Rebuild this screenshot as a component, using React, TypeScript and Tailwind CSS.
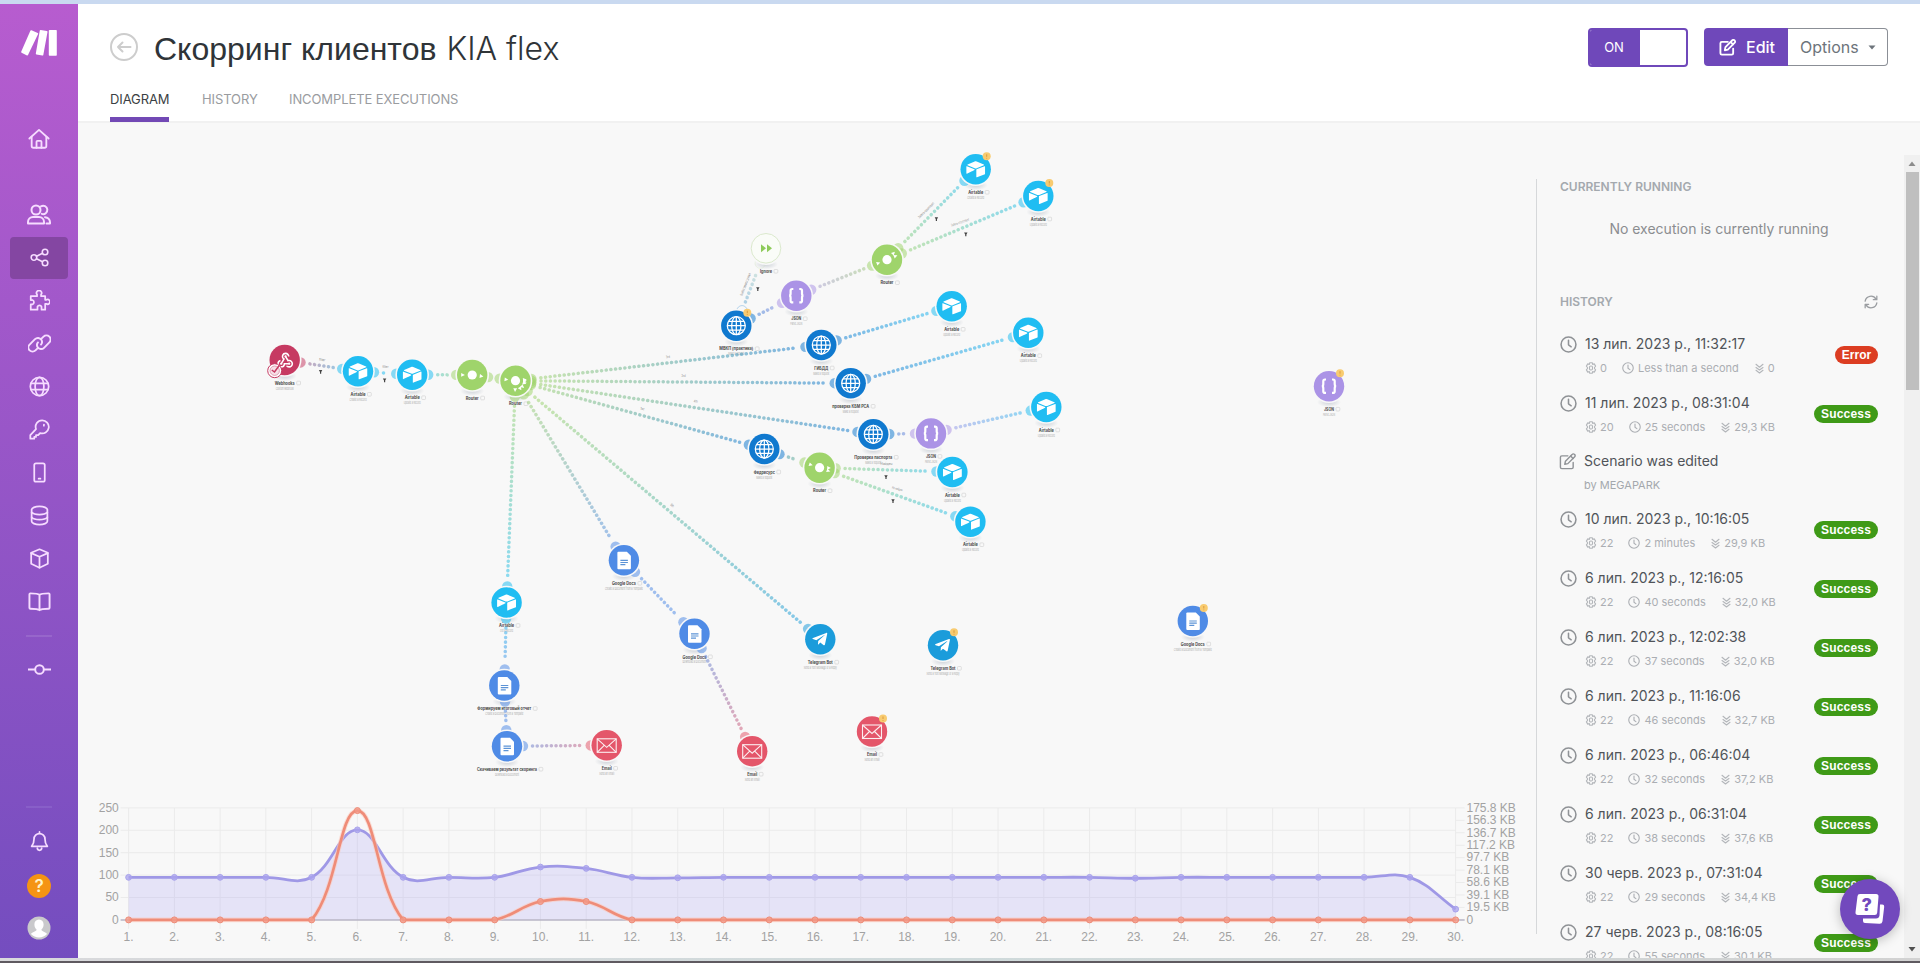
import React from "react";
import { SiAirtable } from "react-icons/si";
import { FaTelegramPlane } from "react-icons/fa";
import { MdWebhook } from "react-icons/md";

/* ---------- sidebar icons ---------- */

type Glyph = { d: string[]; w: number; box?: string };

const GLYPHS: Record<string, Glyph> = {
  home: { w: 22, d: ["M1.5 11.5 12 2l10.5 9.5", "M4 9.6V19.500a2 2 0 0 0 2 2h12a2 2 0 0 0 2-2V9.600", "M9.300 21.500v-6.500a1 1 0 0 1 1-1h3.400a1 1 0 0 1 1 1v6.500"] },
  users: { w: 24, d: ["M9 2.500a4.500 4.500 0 1 1 0 9 4.500 4.500 0 0 1 0-9z", "M1 20.500v-1.500a5 5 0 0 1 5-5h6a5 5 0 0 1 5 5v1.500z", "M14 3.300a4.200 4.200 0 1 1 .8 7.600", "M18 14.200c2.800.300 5 2.300 5 5v1.300h-3.500"] },
  share: { w: 19, d: ["M5 8.500a3.500 3.500 0 1 1 0 7 3.500 3.500 0 0 1 0-7z", "M19 1.500a3.500 3.500 0 1 1 0 7 3.500 3.500 0 0 1 0-7z", "M19 15.500a3.500 3.500 0 1 1 0 7 3.500 3.500 0 0 1 0-7z", "M8.300 10.500l7.500-3.800M8.300 13.500l7.500 3.800"] },
  puzzle: { w: 21, d: ["M2 7h7.200V5.200a2.900 2.900 0 1 1 4.600 0V7h4.700v4.200h1.300a2.700 2.700 0 1 1 0 4.600h-1.300v6.700h-4.200v-3.500a2.500 2.500 0 0 0-4.600 0v3.500H2v-6h2a2.700 2.700 0 0 0 0-5H2z"] },
  link: { w: 23, d: ["M10.200 16.800l-2.400 2.400a4.300 4.300 0 0 1-6.100-6.100l5.600-5.600a4.300 4.300 0 0 1 6.600.6c1 1.500.9 3.600-.3 5", "M13.800 7.200l2.400-2.400a4.300 4.300 0 0 1 6.100 6.100l-5.600 5.600a4.300 4.300 0 0 1-6.600-.6c-1-1.500-.9-3.600.3-5"] },
  globe: { w: 21, d: ["M12 1.500a10.500 10.500 0 1 1 0 21 10.500 10.500 0 0 1 0-21z", "M12 1.500c3 0 5 4.700 5 10.500s-2 10.500-5 10.500-5-4.700-5-10.500 2-10.500 5-10.500z", "M2.500 8.500h19M2.500 15.500h19"] },
  key: { w: 21, d: ["M15 1.500a7.500 7.500 0 1 1-2.300 14.600L10.500 18.500H8v2H6v2H1.500V18.500L8 11.500A7.500 7.500 0 0 1 15 1.500z", "M17 6.300v1.400"] },
  phone: { w: 21, d: ["M8 1.500h8a2 2 0 0 1 2 2v17a2 2 0 0 1-2 2H8a2 2 0 0 1-2-2v-17a2 2 0 0 1 2-2z", "M11 19h2"] },
  database: { w: 21, d: ["M3 5.500c0-2.200 4-4 9-4s9 1.800 9 4v13c0 2.200-4 4-9 4s-9-1.800-9-4z", "M3 8.500c1.500 1.500 5 2.500 9 2.500s7.500-1 9-2.500", "M3 14c1.500 1.800 5 2.800 9 2.800s7.500-1 9-2.800"] },
  cube: { w: 21, d: ["M12 1.500l9.500 4v12.500l-9.500 4.500-9.500-4.500V5.500z", "M2.500 5.800l9.500 4.200 9.500-4.200M12 10v12.500"] },
  book: { w: 23, d: ["M12 5c-1-1-3-1.500-9.500-1.500a1 1 0 0 0-1 1v14a1 1 0 0 0 1 1c6.500 0 8.500.5 9.500 1.500 1-1 3-1.500 9.500-1.500a1 1 0 0 0 1-1v-14a1 1 0 0 0-1-1C15 3.500 13 4 12 5zM12 5v15.500"] },
  commit: { w: 23, d: ["M12 7.500a4.500 4.500 0 1 1 0 9 4.500 4.500 0 0 1 0-9z", "M0.500 12h7M16.500 12h7"] },
  bell: { w: 21, d: ["M12 1v2M12 3a6.300 6.300 0 0 1 6.300 6.300c0 5.200 1.200 6.400 2.700 8.200H3c1.500-1.800 2.700-3 2.700-8.200A6.300 6.300 0 0 1 12 3z", "M9.500 19.500a2.500 2.500 0 0 0 5 0"] },
};

function Glyph({ name }: { name: string }) {
  const g = GLYPHS[name];
  return (
    <svg width={g.w} height={g.w} viewBox="0 0 24 24" fill="none" stroke="#f6dcff" strokeWidth="2" strokeLinejoin="round" strokeLinecap="round">
      {g.d.map((d) => (
        <path key={d} d={d} />
      ))}
    </svg>
  );
}

function NavItem({ name, active }: { name: string; active?: boolean }) {
  return (
    <div className="flex h-[43px] w-full shrink-0 items-center justify-center">
      <div className={active ? "flex h-[42px] w-[58px] items-center justify-center rounded bg-[#8446a2]" : "flex items-center justify-center"}>
        <Glyph name={name} />
      </div>
    </div>
  );
}

function Sidebar() {
  return (
    <nav className="flex w-[78px] shrink-0 flex-col items-center bg-linear-to-b from-[#b75ccf] to-[#744dbf]">
      <svg className="mt-[25px] shrink-0" width="38" height="28" viewBox="0 0 38 28" fill="#fff">
        <path d="M11.500 1.200l6.200 2.800a.8.800 0 0 1 .4 1L8 26a.8.800 0 0 1-1 .4L1.600 23.800a.8.800 0 0 1-.4-1L10.500 1.600a.8.800 0 0 1 1-.4z" />
        <path d="M20.700.900l6.200 1.200a.8.800 0 0 1 .6.900L23.300 26a.8.800 0 0 1-.9.600l-6-1.200a.8.800 0 0 1-.6-.9L19.800 1.500a.8.800 0 0 1 .9-.6z" />
        <rect x="28.800" y="1" width="8" height="25.700" rx=".8" />
      </svg>
      <div className="mt-[60px] w-full"><NavItem name="home" /></div>
      <div className="mt-[33px] w-full">
        <NavItem name="users" />
        <NavItem name="share" active />
        <NavItem name="puzzle" />
        <NavItem name="link" />
        <NavItem name="globe" />
        <NavItem name="key" />
        <NavItem name="phone" />
        <NavItem name="database" />
        <NavItem name="cube" />
        <NavItem name="book" />
      </div>
      <div className="mt-[12px] h-[2px] w-[26px] shrink-0 bg-[#9766cb]" />
      <div className="mt-[11px] w-full"><NavItem name="commit" /></div>
      <div className="mt-[115px] h-[2px] w-[26px] shrink-0 bg-[#885fc8]" />
      <div className="mt-[12px] w-full"><NavItem name="bell" /></div>
      <div className="mt-[11px] flex size-[24px] shrink-0 items-center justify-center rounded-full bg-[#f59413] font-['Inter',sans-serif] text-[17px] leading-none font-semibold text-[#fff3c8]">?</div>
      <svg className="mt-[18px] shrink-0" width="24" height="24" viewBox="0 0 24 24">
        <circle cx="12" cy="12" r="11.500" fill="#c9c9cb" />
        <path d="M12 3.500c3 0 4.600 2.200 4.600 5 0 2.300-1 4.300-2.300 5.200.2 1.700 4.700 2 5.700 4.300a11 11 0 0 1-16 0c1-2.300 5.500-2.600 5.700-4.300-1.300-.9-2.300-2.900-2.300-5.200 0-2.800 1.600-5 4.600-5z" fill="#fff" />
      </svg>
    </nav>
  );
}

/* ---------- header ---------- */

function PenSquare({ size, color, width }: { size: number; color: string; width: number }) {
  return (
    <svg width={size} height={size} viewBox="0 0 24 24" fill="none" stroke={color} strokeWidth={width} strokeLinejoin="round" strokeLinecap="round">
      <path d="M12.500 4H4a2 2 0 0 0-2 2v14a2 2 0 0 0 2 2h14a2 2 0 0 0 2-2v-6.500" />
      <path d="M18.800 1.800a2 2 0 0 1 2.900 0l.5.500a2 2 0 0 1 0 2.900L12.500 15l-4.300.9.900-4.400z" />
      <path d="M16.500 4.300l3.300 3.300" />
    </svg>
  );
}

function Header() {
  return (
    <header className="flex h-[119px] shrink-0 flex-col border-b-2 border-[#f1f1f1] bg-white">
      <div className="flex h-[77px] items-start pl-[32px] pr-[32px]">
        <svg className="mt-[29px] shrink-0" width="28" height="28" viewBox="0 0 28 28" fill="none" stroke="#cdcdcd" strokeWidth="2" strokeLinecap="round" strokeLinejoin="round">
          <circle cx="14" cy="14" r="13" />
          <path d="M20.500 14H8M12.500 9.500L8 14l4.500 4.500" />
        </svg>
        <h1 className="mt-[25px] ml-[16px] flex items-baseline gap-[10px] text-[32px] leading-[40px] whitespace-nowrap text-[#2f3438]">
          <span className="font-['Liberation_Sans',Arial,sans-serif]">Скорринг клиентов</span>
          <span className="font-light">KIA flex</span>
        </h1>
        <div className="mt-[24px] ml-auto flex h-[39px] w-[100px] overflow-hidden rounded border-2 border-[#6f48ba] bg-white">
          <div className="flex w-[50px] items-center justify-center bg-[#6f48ba] pr-[2px] text-[13px] text-white">ON</div>
        </div>
        <div className="mt-[24px] ml-[16px] flex h-[38px]">
          <div className="flex w-[84px] items-center rounded-l bg-[#6f48ba] pl-[15px] text-[16px] font-medium text-white">
            <PenSquare size={17} color="#fff" width={2.6} />
            <span className="ml-[10px]">Edit</span>
          </div>
          <div className="flex w-[100px] items-center rounded-r border border-l-0 border-[#8b8f96] pl-[12px] text-[16px] text-[#6d747b]">
            <span>Options</span>
            <svg className="ml-[9px]" width="8" height="5" viewBox="0 0 8 5"><path d="M0.500 0.500h7L4 4.500z" fill="#6d747b" /></svg>
          </div>
        </div>
      </div>
      <div className="flex h-[42px] shrink-0 gap-[33px] pl-[32px] text-[13px] leading-[41px] tracking-[-0.1px] text-[#9a9c9f]">
        <div className="h-[43px] w-[59px] border-b-[5px] border-[#7249b5] text-[#3b3f44]">DIAGRAM</div>
        <div className="w-[54px]">HISTORY</div>
        <div>INCOMPLETE EXECUTIONS</div>
      </div>
    </header>
  );
}

/* ---------- diagram ---------- */

type Kind = "webhook" | "airtable" | "router" | "http" | "json" | "docs" | "telegram" | "email" | "ignore";

const COLORS: Record<Kind, string> = {
  webhook: "#c63a62",
  airtable: "#20bdf2",
  router: "#9fd46b",
  http: "#1079cf",
  json: "#ab93e6",
  docs: "#4f8be6",
  telegram: "#1b9cdb",
  email: "#e4566a",
  ignore: "#c9e2b4",
};

type Node = { x: number; y: number; k: Kind; n: string; w: number; s?: string; sw?: number; warn?: boolean };

const NODES: Record<string, Node> = {
  wh: { x: 284.7, y: 360, k: "webhook", n: "Webhooks", w: 20, s: "Custom webhook", sw: 18 },
  a1: { x: 358, y: 371.3, k: "airtable", n: "Airtable", w: 15, s: "Create a Record", sw: 17 },
  a2: { x: 412.2, y: 374.7, k: "airtable", n: "Airtable", w: 15, s: "Update a Record", sw: 17 },
  r1: { x: 472.2, y: 375, k: "router", n: "Router", w: 13 },
  r2: { x: 515.5, y: 380.7, k: "router", n: "Router", w: 13 },
  ig: { x: 766, y: 248.3, k: "ignore", n: "Ignore", w: 12 },
  h1: { x: 736.3, y: 325.7, k: "http", n: "МВКП (практика)", w: 34, s: "Make a request", sw: 16, warn: true },
  j1: { x: 796.3, y: 295.7, k: "json", n: "JSON", w: 10, s: "Parse JSON", sw: 12 },
  r3: { x: 887, y: 259.7, k: "router", n: "Router", w: 13 },
  a3: { x: 975.7, y: 169.3, k: "airtable", n: "Airtable", w: 15, s: "Create a Record", sw: 17, warn: true },
  a4: { x: 1038.3, y: 196, k: "airtable", n: "Airtable", w: 15, s: "Update a Record", sw: 17, warn: true },
  h2: { x: 821.3, y: 345, k: "http", n: "ГИБДД", w: 14, s: "Make a request", sw: 16 },
  a5: { x: 951.7, y: 306.3, k: "airtable", n: "Airtable", w: 15, s: "Update a Record", sw: 17 },
  h3: { x: 850.7, y: 383.3, k: "http", n: "проверка КБМ РСА", w: 37, s: "Make a request", sw: 16 },
  a6: { x: 1028.3, y: 332.7, k: "airtable", n: "Airtable", w: 15, s: "Update a Record", sw: 17 },
  h4: { x: 873.3, y: 434.3, k: "http", n: "Проверка паспорта", w: 38, s: "Make a request", sw: 16 },
  j2: { x: 931, y: 433.4, k: "json", n: "JSON", w: 10, s: "Parse JSON", sw: 12 },
  a7: { x: 1046.3, y: 407, k: "airtable", n: "Airtable", w: 15, s: "Update a Record", sw: 17 },
  h5: { x: 764.3, y: 449, k: "http", n: "Федресурс", w: 21, s: "Make a request", sw: 16 },
  r4: { x: 819.6, y: 467.7, k: "router", n: "Router", w: 13 },
  a8: { x: 952.4, y: 472, k: "airtable", n: "Airtable", w: 15, s: "Update a Record", sw: 17 },
  a9: { x: 970.4, y: 521.7, k: "airtable", n: "Airtable", w: 15, s: "Update a Record", sw: 17 },
  j3: { x: 1329, y: 386.2, k: "json", n: "JSON", w: 10, s: "Parse JSON", sw: 12, warn: true },
  d4: { x: 1192.8, y: 621, k: "docs", n: "Google Docs", w: 24, s: "Create a Document from a Template", sw: 38, warn: true },
  a10: { x: 506.6, y: 602.5, k: "airtable", n: "Airtable", w: 15, s: "Get a Record", sw: 13 },
  d1: { x: 504.3, y: 685.5, k: "docs", n: "Формируем итоговый отчет", w: 54, s: "Create a Document from a Template", sw: 38 },
  d2: { x: 507, y: 746.2, k: "docs", n: "Скачиваем результат скоринга", w: 60, s: "Download a Document", sw: 24 },
  e1: { x: 606.7, y: 745.3, k: "email", n: "Email", w: 10, s: "Send an Email", sw: 15 },
  d3: { x: 623.9, y: 560.3, k: "docs", n: "Google Docs", w: 24, s: "Create a Document from a Template", sw: 38 },
  d5: { x: 694.5, y: 633.8, k: "docs", n: "Google Docs", w: 24, s: "Download a Document", sw: 24 },
  e2: { x: 752.2, y: 751.2, k: "email", n: "Email", w: 10, s: "Send an Email", sw: 15 },
  e3: { x: 872, y: 731.5, k: "email", n: "Email", w: 10, s: "Send an Email", sw: 15, warn: true },
  t1: { x: 820.3, y: 639.2, k: "telegram", n: "Telegram Bot", w: 25, s: "Send a Text Message or a Reply", sw: 33 },
  t2: { x: 943, y: 645.3, k: "telegram", n: "Telegram Bot", w: 25, s: "Send a Text Message or a Reply", sw: 33, warn: true },
};

const EDGES: [string, string][] = [
  ["wh", "a1"], ["a1", "a2"], ["a2", "r1"], ["r1", "r2"],
  ["r2", "h2"], ["r2", "h3"], ["r2", "h4"], ["r2", "h5"], ["r2", "t1"], ["r2", "d3"], ["r2", "a10"],
  ["h1", "j1"], ["h1", "ig"], ["j1", "r3"], ["r3", "a3"], ["r3", "a4"],
  ["h2", "a5"], ["h3", "a6"], ["h4", "j2"], ["j2", "a7"], ["h5", "r4"], ["r4", "a8"], ["r4", "a9"],
  ["a10", "d1"], ["d1", "d2"], ["d2", "e1"], ["d3", "d5"], ["d5", "e2"],
];

const NOTES: { x: number; y: number; r: number; t: string; w: number }[] = [
  { x: 322, y: 361, r: 6, t: "filter", w: 6 },
  { x: 385.500, y: 368, r: 0, t: "filter", w: 6 },
  { x: 927, y: 211, r: -45, t: "Запись существует", w: 21 },
  { x: 960.500, y: 223.500, r: -19, t: "Запись отсутствует", w: 19 },
  { x: 746.500, y: 285, r: -69, t: "Ошибка сервиса данных", w: 24 },
  { x: 886.500, y: 464.500, r: 0, t: "Найден", w: 12 },
  { x: 897, y: 490, r: 15, t: "Не найден", w: 11 },
  { x: 668, y: 358, r: -6, t: "3rd", w: 4 },
  { x: 683.500, y: 377, r: 0, t: "2nd", w: 4 },
  { x: 695.500, y: 402.500, r: 8, t: "4th", w: 4 },
  { x: 671.500, y: 506.500, r: 38, t: "6th", w: 4 },
  { x: 642, y: 410, r: 14, t: "1st", w: 4 },
];

const FUNNELS: [number, number][] = [[320.6, 371.7], [384.6, 380.2], [936.4, 219], [965.8, 234.2], [757.8, 289], [886, 477], [893, 501]];

function NodeIcon({ node }: { node: Node }) {
  const { x, y, k } = node;
  if (k === "airtable") return <SiAirtable x={x - 9.5} y={y - 9.5} size={19} color="#fff" />;
  if (k === "telegram") return <FaTelegramPlane x={x - 9} y={y - 8.5} size={17} color="#fff" />;
  if (k === "webhook") return <MdWebhook x={x - 9} y={y - 9} size={19} color="#fff" />;
  if (k === "router") {
    const arrows = EDGES.flatMap(([a, b]) => {
      if (NODES[a] === node) return [{ t: Math.atan2(NODES[b].y - y, NODES[b].x - x), flip: 0 }];
      if (NODES[b] === node) return [{ t: Math.atan2(NODES[a].y - y, NODES[a].x - x), flip: 180 }];
      return [];
    });
    return (
      <g fill="#fff">
        <circle cx={x} cy={y} r="4.6" />
        {arrows.map((a, i) => (
          <path key={i} d="M-1.700 -1.900L2 0L-1.700 1.900z" transform={`translate(${x + Math.cos(a.t) * 9.3} ${y + Math.sin(a.t) * 9.3}) rotate(${(a.t * 180) / Math.PI + a.flip})`} />
        ))}
      </g>
    );
  }
  const g = `translate(${x} ${y})`;
  if (k === "http")
    return (
      <g transform={g} fill="none" stroke="#fff" strokeWidth="1.25">
        <circle r="9" />
        <ellipse rx="4.600" ry="9" />
        <path d="M0 -9V9M-9 0H9M-7.800 -4.300H7.800M-7.800 4.300H7.800" />
      </g>
    );
  if (k === "json")
    return (
      <g transform={g} fill="none" stroke="#fff" strokeWidth="2.200">
        <path d="M-3 -6.700H-4c-1.300 0-1.700.6-1.700 1.700v2.800c0 1.300-.4 2.200-1.500 2.200 1.100 0 1.500.9 1.500 2.200v2.800c0 1.100.4 1.700 1.700 1.700h1" />
        <path d="M3 -6.700H4c1.300 0 1.700.6 1.700 1.700v2.800c0 1.300.4 2.200 1.500 2.200-1.100 0-1.500.9-1.500 2.200v2.800c0 1.100-.4 1.700-1.700 1.700h-1" />
      </g>
    );
  if (k === "docs")
    return (
      <g transform={g}>
        <path d="M-5.500 -8.500H3L7 -4.500V8A1 1 0 0 1 6 9H-5.500A1 1 0 0 1 -6.500 8V-7.500A1 1 0 0 1 -5.500 -8.500z" fill="#fff" />
        <path d="M-3.500 0H4M-3.500 2.200H4M-3.500 4.400H1.500" stroke="#5c93d6" strokeWidth="1.200" />
      </g>
    );
  if (k === "email")
    return (
      <g transform={g} fill="none" stroke="#fff" strokeWidth="1.100" opacity=".9">
        <rect x="-9.500" y="-6.500" width="19" height="13.500" />
        <path d="M-9.500 -6.500L0 2L9.500 -6.500M-9.500 7L-2.500 0M9.500 7L2.500 0" />
      </g>
    );
  return (
    <g transform={g} fill="#8ecb5b">
      <path d="M-5 -4L0 0L-5 4zM1 -4L6 0L1 4z" />
    </g>
  );
}

function Diagram() {
  return (
    <svg className="block shrink-0 font-['Inter',sans-serif]" width="1459" height="667" viewBox="78 123 1459 667">
      <defs>
        <radialGradient id="shade">
          <stop offset="0" stopColor="#8d98a8" stopOpacity=".4" />
          <stop offset="1" stopColor="#8d98a8" stopOpacity="0" />
        </radialGradient>
        {EDGES.map(([a, b]) => {
          const p = NODES[a], q = NODES[b];
          return (
            <linearGradient key={a + b} id={`g-${a}-${b}`} gradientUnits="userSpaceOnUse" x1={p.x} y1={p.y} x2={q.x} y2={q.y}>
              <stop offset="0.05" stopColor={COLORS[p.k]} />
              <stop offset="0.95" stopColor={COLORS[q.k]} />
            </linearGradient>
          );
        })}
      </defs>
      {Object.entries(NODES).map(([id, n]) => (
        <ellipse key={id} cx={n.x} cy={n.y + 16} rx="12" ry="5" fill="url(#shade)" />
      ))}
      {Object.entries(NODES).map(([id, n]) => (
        <g key={id}>
          <text x={n.x} y={n.y + 24.700} fontSize="4.600" fontWeight="700" fill="#4a4a4a" textAnchor="middle" textLength={n.w} lengthAdjust="spacingAndGlyphs">{n.n}</text>
          <rect x={n.x + n.w / 2 + 2} y={n.y + 21.200} width="3.800" height="3.600" rx=".8" fill="none" stroke="#cfcfcf" strokeWidth=".6" />
          {n.s && (
            <text x={n.x} y={n.y + 29.600} fontSize="3.800" fill="#aaaaaa" textAnchor="middle" textLength={n.sw} lengthAdjust="spacingAndGlyphs">{n.s}</text>
          )}
        </g>
      ))}
      {EDGES.map(([a, b]) => {
        const p = NODES[a], q = NODES[b];
        const len = Math.hypot(q.x - p.x, q.y - p.y);
        const ux = (q.x - p.x) / len, uy = (q.y - p.y) / len;
        const faint = q.k === "ignore";
        return (
          <g key={a + b} opacity={faint ? 0.4 : 0.52}>
            <circle cx={p.x + ux * 16} cy={p.y + uy * 16} r="5.200" fill={faint ? "none" : COLORS[p.k]} stroke={faint ? COLORS[p.k] : "none"} strokeWidth=".7" />
            <circle cx={q.x - ux * 16} cy={q.y - uy * 16} r="5.200" fill={faint ? "none" : COLORS[q.k]} stroke={faint ? COLORS[q.k] : "none"} strokeWidth=".7" />
            {len > 50 && (
              <line x1={p.x + ux * 25.500} y1={p.y + uy * 25.500} x2={q.x - ux * 25} y2={q.y - uy * 25} stroke={`url(#g-${a}-${b})`} strokeWidth="3.500" strokeLinecap="round" strokeDasharray="0.100 4.600" />
            )}
          </g>
        );
      })}
      {NOTES.map((n, i) => (
        <text key={i} transform={`translate(${n.x} ${n.y}) rotate(${n.r})`} fontSize="3.600" fill="#8a8a8a" textAnchor="middle" textLength={n.w} lengthAdjust="spacingAndGlyphs">{n.t}</text>
      ))}
      {FUNNELS.map(([x, y]) => (
        <path key={x} d={`M${x - 1.7} ${y - 1.8}h3.4l-1.100 2v1.800h-1.200v-1.800z`} fill="#444" />
      ))}
      {Object.entries(NODES).map(([id, n]) => (
        <g key={id}>
          <circle cx={n.x} cy={n.y} r="16.800" fill="#f8f8f8" />
          {n.k === "ignore" ? <circle cx={n.x} cy={n.y} r="14.800" fill="#fafcf8" stroke="#dbe9cd" strokeWidth="1" /> : <circle cx={n.x} cy={n.y} r="15.200" fill={COLORS[n.k]} />}
          <NodeIcon node={n} />
          {n.warn && (
            <g>
              <circle cx={n.x + 11} cy={n.y - 13} r="4" fill="#f8cb70" />
              <path d={`M${n.x + 11} ${n.y - 15}v2.500m0 1v.8`} stroke="#d9953a" strokeWidth=".9" />
            </g>
          )}
        </g>
      ))}
      <circle cx="274.700" cy="370.700" r="7" fill="#fff" stroke="#c63a62" strokeWidth="1" />
      <circle cx="274.700" cy="370.700" r="4.700" fill="#f7dfe6" stroke="#d98aa2" strokeWidth=".8" />
      <path d="M271.800 370l2.700 2 4.700-6.500" fill="none" stroke="#c63a62" strokeWidth="1.500" />
    </svg>
  );
}

/* ---------- chart ---------- */

const X0 = 128.6, STEP = 45.76, Y0 = 919.9, UNIT = 0.448;
const OPS = [95, 95, 95, 95, 95, 201, 95, 95, 95, 118, 115, 95, 94, 95, 95, 95, 95, 95, 95, 95, 95, 95, 93, 95, 95, 95, 95, 95, 95, 24];
const DATA = [0, 0, 0, 0, 0, 244, 0, 0, 0, 41, 41, 0, 0, 0, 0, 0, 0, 0, 0, 0, 0, 0, 0, 0, 0, 0, 0, 0, 0, 0];
const KB = ["175.8 KB", "156.3 KB", "136.7 KB", "117.2 KB", "97.7 KB", "78.1 KB", "58.6 KB", "39.1 KB", "19.5 KB", "0"];

const px = (i: number) => X0 + i * STEP;
const py = (v: number) => Y0 - v * UNIT;

function spline(values: number[]) {
  const pts = values.map((v, i) => [px(i), py(v)]);
  const clamp = (y: number) => Math.min(Y0, Math.max(807.9, y));
  const ctl = pts.map((p, i) => {
    const a = pts[i - 1] ?? p, b = pts[i + 1] ?? p;
    const d1 = Math.hypot(p[0] - a[0], p[1] - a[1]), d2 = Math.hypot(b[0] - p[0], b[1] - p[1]);
    const f1 = (0.4 * d1) / (d1 + d2), f2 = (0.4 * d2) / (d1 + d2);
    return [p[0] - f1 * (b[0] - a[0]), clamp(p[1] - f1 * (b[1] - a[1])), p[0] + f2 * (b[0] - a[0]), clamp(p[1] + f2 * (b[1] - a[1]))];
  });
  return pts.map((p, i) => (i === 0 ? `M${p[0]} ${p[1]}` : `C${ctl[i - 1][2]} ${ctl[i - 1][3]} ${ctl[i][0]} ${ctl[i][1]} ${p[0]} ${p[1]}`)).join("");
}

function Chart() {
  const top = 807.9;
  return (
    <svg className="block shrink-0 font-['Liberation_Sans',Arial,sans-serif]" width="1459" height="168" viewBox="78 790 1459 168" fontSize="12" fill="#a2a2a2">
      <g stroke="#ebebeb" strokeWidth="1">
        {OPS.map((_, i) => (
          <line key={i} x1={px(i)} x2={px(i)} y1={top} y2={Y0 + 9} />
        ))}
        {[50, 100, 150, 200, 250].map((v) => (
          <line key={v} x1={X0 - 8} x2={px(29)} y1={py(v)} y2={py(v)} />
        ))}
        {KB.map((k, i) => (
          <line key={k} x1={px(29)} x2={px(29) + 9} y1={top + i * 12.44} y2={top + i * 12.44} />
        ))}
      </g>
      <path d={`${spline(OPS)}V${Y0}H${X0}z`} fill="#9b93f5" fillOpacity=".2" />
      <line x1={X0 - 8} x2={px(29) + 9} y1={Y0} y2={Y0} stroke="#b9b6c6" strokeWidth="1.500" />
      <path d={spline(OPS)} fill="none" stroke="#9f98e6" strokeWidth="2.800" />
      {OPS.map((v, i) => (
        <circle key={i} cx={px(i)} cy={py(v)} r="2.900" fill="#aaa3ee" fillOpacity=".75" stroke="#a8a2ec" strokeWidth="1" />
      ))}
      <path d={spline(DATA)} fill="none" stroke="#fbc9bd" strokeWidth="4.600" opacity=".6" />
      <path d={spline(DATA)} fill="none" stroke="#ef8c78" strokeWidth="2.700" />
      {DATA.map((v, i) => (
        <circle key={i} cx={px(i)} cy={py(v)} r="3" fill="#f39a88" fillOpacity=".8" stroke="#ee8c78" strokeWidth="1" />
      ))}
      {[0, 50, 100, 150, 200, 250].map((v) => (
        <text key={v} x="118.800" y={py(v) + 3.900} textAnchor="end">{v}</text>
      ))}
      {OPS.map((_, i) => (
        <text key={i} x={px(i)} y="940.600" textAnchor="middle">{i + 1}.</text>
      ))}
      {KB.map((k, i) => (
        <text key={k} x="1466.500" y={top + i * 12.44 + 3.800}>{k}</text>
      ))}
    </svg>
  );
}

/* ---------- history panel ---------- */

type Run = { date: string; ops: string; time: string; size: string; error?: boolean; by?: string };

const RUNS: Run[] = [
  { date: "13 лип. 2023 р., 11:32:17", ops: "0", time: "Less than a second", size: "0", error: true },
  { date: "11 лип. 2023 р., 08:31:04", ops: "20", time: "25 seconds", size: "29,3 KB" },
  { date: "Scenario was edited", ops: "", time: "", size: "", by: "by MEGAPARK" },
  { date: "10 лип. 2023 р., 10:16:05", ops: "22", time: "2 minutes", size: "29,9 KB" },
  { date: "6 лип. 2023 р., 12:16:05", ops: "22", time: "40 seconds", size: "32,0 KB" },
  { date: "6 лип. 2023 р., 12:02:38", ops: "22", time: "37 seconds", size: "32,0 KB" },
  { date: "6 лип. 2023 р., 11:16:06", ops: "22", time: "46 seconds", size: "32,7 KB" },
  { date: "6 лип. 2023 р., 06:46:04", ops: "22", time: "32 seconds", size: "37,2 KB" },
  { date: "6 лип. 2023 р., 06:31:04", ops: "22", time: "38 seconds", size: "37,6 KB" },
  { date: "30 черв. 2023 р., 07:31:04", ops: "22", time: "29 seconds", size: "34,4 KB" },
  { date: "27 черв. 2023 р., 08:16:05", ops: "22", time: "55 seconds", size: "30,1 KB" },
];

function Clock({ size, color, width }: { size: number; color: string; width: number }) {
  return (
    <svg className="shrink-0" width={size} height={size} viewBox="0 0 24 24" fill="none" stroke={color} strokeWidth={width} strokeLinecap="round" strokeLinejoin="round">
      <circle cx="12" cy="12" r="10.500" />
      <path d="M12 6v6.500l3.800 2.700" />
    </svg>
  );
}

function Gear() {
  return (
    <svg className="shrink-0" width="12" height="12" viewBox="0 0 24 24" fill="none" stroke="#b3b6ba" strokeWidth="2.200" strokeLinejoin="round">
      <path d="M9.500 1.500h5l.8 3.200 3.200-.9 2.700 4.400L19 11v2l2.200 2.800-2.700 4.400-3.200-.9-.8 3.200h-5l-.8-3.200-3.200.9-2.700-4.400L5 13v-2L2.800 8.200l2.700-4.400 3.200.9z" />
      <rect x="9" y="8" width="6" height="8" rx="2.500" />
    </svg>
  );
}

function Chevrons() {
  return (
    <svg className="shrink-0" width="9" height="11" viewBox="0 0 18 22" fill="none" stroke="#b3b6ba" strokeWidth="2.200" strokeLinecap="round" strokeLinejoin="round">
      <path d="M2 2.500l7 6 7-6M2 9l7 5 7-5M2 14.500l7 5.500 7-5.500" />
    </svg>
  );
}

function RunRow({ run }: { run: Run }) {
  return (
    <div className={run.by ? "-mt-px flex h-[58px] shrink-0" : "flex h-[59px] shrink-0"}>
      <div className={run.by ? "w-[25px] shrink-0 pt-[5px]" : "w-[26px] shrink-0 pt-[5px]"}>
        {run.by ? <PenSquare size={17} color="#8f9296" width={2} /> : <div className="pl-px"><Clock size={17} color="#8f9296" width={2.2} /></div>}
      </div>
      <div className="flex-1 whitespace-nowrap">
        <div className="h-[26px] text-[14px] leading-[26px] text-[#505459]">{run.date}</div>
        {run.by ? (
          <div className="h-[22px] text-[11px] leading-[22px] text-[#a4a8ad]">{run.by}</div>
        ) : (
          <div className="flex h-[22px] items-center text-[11px] leading-[22px] text-[#abaeb3]">
            <Gear />
            <span className="ml-[3px]">{run.ops}</span>
            <span className="ml-[15px]"><Clock size={12} color="#abaeb3" width={2.2} /></span>
            <span className="ml-[4px]">{run.time}</span>
            <span className="ml-[16px]"><Chevrons /></span>
            <span className="ml-[4px]">{run.size}</span>
          </div>
        )}
      </div>
      {!run.by && (
        <div className={run.error ? "mt-[15px] flex h-[18px] w-[43px] shrink-0 items-center justify-center rounded-full bg-[#dc3d22] font-['Liberation_Sans',Arial,sans-serif] text-[12px] font-bold text-white" : "mt-[15px] flex h-[18px] w-[64px] shrink-0 items-center justify-center rounded-full bg-[#3f9a17] font-['Liberation_Sans',Arial,sans-serif] text-[12px] font-bold tracking-[0.2px] text-white"}>
          {run.error ? "Error" : "Success"}
        </div>
      )}
    </div>
  );
}

function HistoryPanel() {
  return (
    <aside className="flex min-w-0 flex-1 flex-col overflow-hidden">
      <div className="flex h-full pt-[32px]">
        <div className="mt-[24px] h-[755px] w-px shrink-0 bg-[#d6d8da]" />
        <div className="flex w-[367px] shrink-0 flex-col pr-[26px] pl-[22px]">
          <div className="mt-[23px] h-[18px] shrink-0 pl-[1px] text-[12px] leading-[18px] font-semibold text-[#a4a9ae]">CURRENTLY RUNNING</div>
          <div className="mt-[23px] h-[20px] shrink-0 pl-[1px] text-center text-[14px] leading-[20px] text-[#8b8d90]">No execution is currently running</div>
          <div className="mt-[53px] flex h-[20px] shrink-0 items-center pl-[1px] text-[12px] leading-[20px] font-semibold text-[#a4a9ae]">
            <span>HISTORY</span>
            <svg className="ml-auto" width="14" height="14" viewBox="0 0 24 24" fill="none" stroke="#9a9da1" strokeWidth="2.200" strokeLinecap="round" strokeLinejoin="round">
              <path d="M2 10.500A10 10 0 0 1 20.500 7M22 2v6h-6M22 13.500A10 10 0 0 1 3.500 17M2 22v-6h6" />
            </svg>
          </div>
          <div className="mt-[19px] flex flex-col">
            {RUNS.map((r) => (
              <RunRow key={r.date} run={r} />
            ))}
          </div>
        </div>
        <div className="flex w-[16px] shrink-0 flex-col items-center bg-[#f0f0f0]">
          <svg className="mt-[6px] shrink-0" width="8" height="5" viewBox="0 0 8 5"><path d="M0.500 5h7L4 0.500z" fill="#8c8c8c" /></svg>
          <div className="mt-[6px] h-[218px] w-[13px] shrink-0 bg-[#bfbfbf]" />
          <svg className="mt-auto mb-[6px] shrink-0" width="8" height="5" viewBox="0 0 8 5"><path d="M0.500 0h7L4 4.500z" fill="#505050" /></svg>
        </div>
      </div>
    </aside>
  );
}

function HelpButton() {
  return (
    <div className="absolute top-[879px] left-[1840px] flex size-[60px] items-center justify-center rounded-full bg-[#7249bd] shadow-[0_2px_12px_rgba(0,0,0,0.25)]">
      <svg width="32" height="32" viewBox="0 0 32 32">
        <path d="M26 11.500h2.200a2 2 0 0 1 2 2.200l-1.700 14.500a3 3 0 0 1-3.200 2.500L11 30a2 2 0 0 1-2-2v-2.500h13a3.500 3.500 0 0 0 3.500-3z" fill="#fff" />
        <path d="M6 1h16a2.500 2.500 0 0 1 2.500 2.700l-1.300 16a2.500 2.500 0 0 1-2.500 2.300H4a2.500 2.500 0 0 1-2.500-2.700L3.500 3.300A2.500 2.500 0 0 1 6 1z" fill="#fff" />
        <text x="12.800" y="18" fontSize="18" fontWeight="800" textAnchor="middle" fill="#7249bd">?</text>
      </svg>
    </div>
  );
}

export default function App() {
  return (
    <div className="relative flex h-[963px] w-[1920px] flex-col overflow-hidden bg-[#f8f8f8] font-['Inter','Noto_Sans',sans-serif]">
      <div className="h-[4px] shrink-0 bg-[#c9d9f0]" />
      <div className="flex h-[954px] shrink-0 overflow-hidden">
        <Sidebar />
        <main className="flex min-w-0 flex-1 flex-col">
          <Header />
          <div className="flex h-[835px] shrink-0">
            <div className="flex w-[1458px] shrink-0 flex-col">
              <Diagram />
              <Chart />
            </div>
            <HistoryPanel />
          </div>
        </main>
      </div>
      <div className="h-[3px] shrink-0 bg-linear-to-r from-[#d9d9dc] via-[#cfdadb] to-[#d2d2d2]" />
      <div className="h-[2px] shrink-0 bg-[#5f5a60]" />
      <HelpButton />
    </div>
  );
}
